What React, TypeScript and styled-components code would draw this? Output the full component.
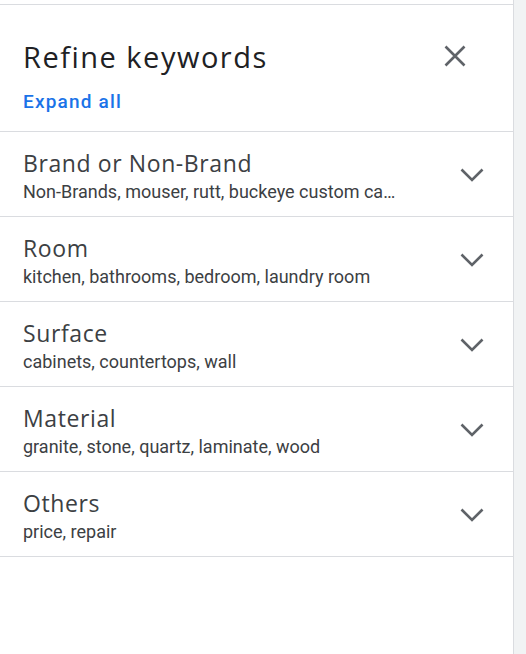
import React from 'react';
import styled, { createGlobalStyle } from 'styled-components';

interface Group {
  name: string,
  keywords: string
}

const groups: Group[] = [
  { name: 'Brand or Non-Brand', keywords: 'Non-Brands, mouser, rutt, buckeye custom cabinets, kraftmaid' },
  { name: 'Room', keywords: 'kitchen, bathrooms, bedroom, laundry room' },
  { name: 'Surface', keywords: 'cabinets, countertops, wall' },
  { name: 'Material', keywords: 'granite, stone, quartz, laminate, wood' },
  { name: 'Others', keywords: 'price, repair' }
];

const CloseIcon = () => (
  <svg width="22" height="22" viewBox="0 0 22 22">
    <path d="M1.5 1.5L20.5 20.5M20.5 1.5L1.5 20.5" stroke="#5f6368" strokeWidth="2.6" fill="none" />
  </svg>
);

const ChevronIcon = () => (
  <svg width="24" height="14" viewBox="0 0 24 14">
    <path d="M1.5 1.5L12 12L22.5 1.5" stroke="#5f6368" strokeWidth="2.6" fill="none" />
  </svg>
);

const App: React.FC = () => (
  <>
    <GlobalStyle />
    <Page>
      <Column>
        <Panel>
          <Header>
            <TitleRow>
              <Title>Refine keywords</Title>
              <CloseButton aria-label="Close">
                <CloseIcon />
              </CloseButton>
            </TitleRow>
            <ExpandLink>Expand all</ExpandLink>
          </Header>
          {groups.map((group) => (
            <GroupRow key={group.name}>
              <GroupText>
                <GroupName>{group.name}</GroupName>
                <GroupKeywords>{group.keywords}</GroupKeywords>
              </GroupText>
              <ChevronButton aria-label={`Expand ${group.name}`}>
                <ChevronIcon />
              </ChevronButton>
            </GroupRow>
          ))}
        </Panel>
      </Column>
      <Gutter />
    </Page>
  </>
);

const GlobalStyle = createGlobalStyle`
  body {
    margin: 0;
    background: #fff;
    font-family: Roboto, "Liberation Sans", sans-serif;
  }
`;

const Page = styled.div`
  display: flex;
  min-height: 100vh;
`;

const Column = styled.div`
  width: 513px;
  padding-top: 4px;
  border-right: 1px solid #dadce0;
`;

const Gutter = styled.div`
  flex: 1;
  background: #f1f3f4;
`;

const Panel = styled.div`
  border-top: 1px solid #dadce0;
`;

const Header = styled.div`
  height: 127px;
  box-sizing: border-box;
  padding: 32px 23px 0;
  border-bottom: 1px solid #dadce0;
`;

const TitleRow = styled.div`
  display: flex;
  justify-content: space-between;
  align-items: center;
  padding-right: 24px;
`;

const Title = styled.h1`
  margin: 0;
  font-family: "Open Sans", sans-serif;
  font-size: 29px;
  font-weight: 400;
  letter-spacing: 1.5px;
  color: #202124;
  line-height: 40px;
`;

const CloseButton = styled.div`
  display: flex;
  margin-top: -2px;
  cursor: pointer;
`;

const ExpandLink = styled.a`
  display: inline-block;
  margin-top: 13px;
  font-size: 19px;
  font-weight: 500;
  letter-spacing: 1.2px;
  color: #1a73e8;
  cursor: pointer;
`;

const GroupRow = styled.div`
  display: flex;
  height: 85px;
  box-sizing: border-box;
  padding: 16px 29px 0 23px;
  border-bottom: 1px solid #dadce0;
`;

const GroupText = styled.div`
  display: flex;
  flex-direction: column;
  width: 382px;
  margin-right: auto;
`;

const GroupName = styled.div`
  font-family: "Open Sans", sans-serif;
  font-size: 23px;
  letter-spacing: 0.6px;
  color: #3c4043;
  line-height: 30px;
`;

const GroupKeywords = styled.div`
  margin-top: 3px;
  font-size: 18px;
  color: #3c4043;
  line-height: 22px;
  white-space: nowrap;
  overflow: hidden;
  text-overflow: ellipsis;
`;

const ChevronButton = styled.div`
  display: flex;
  align-self: center;
  margin-top: -14px;
  cursor: pointer;
`;

export default App;
